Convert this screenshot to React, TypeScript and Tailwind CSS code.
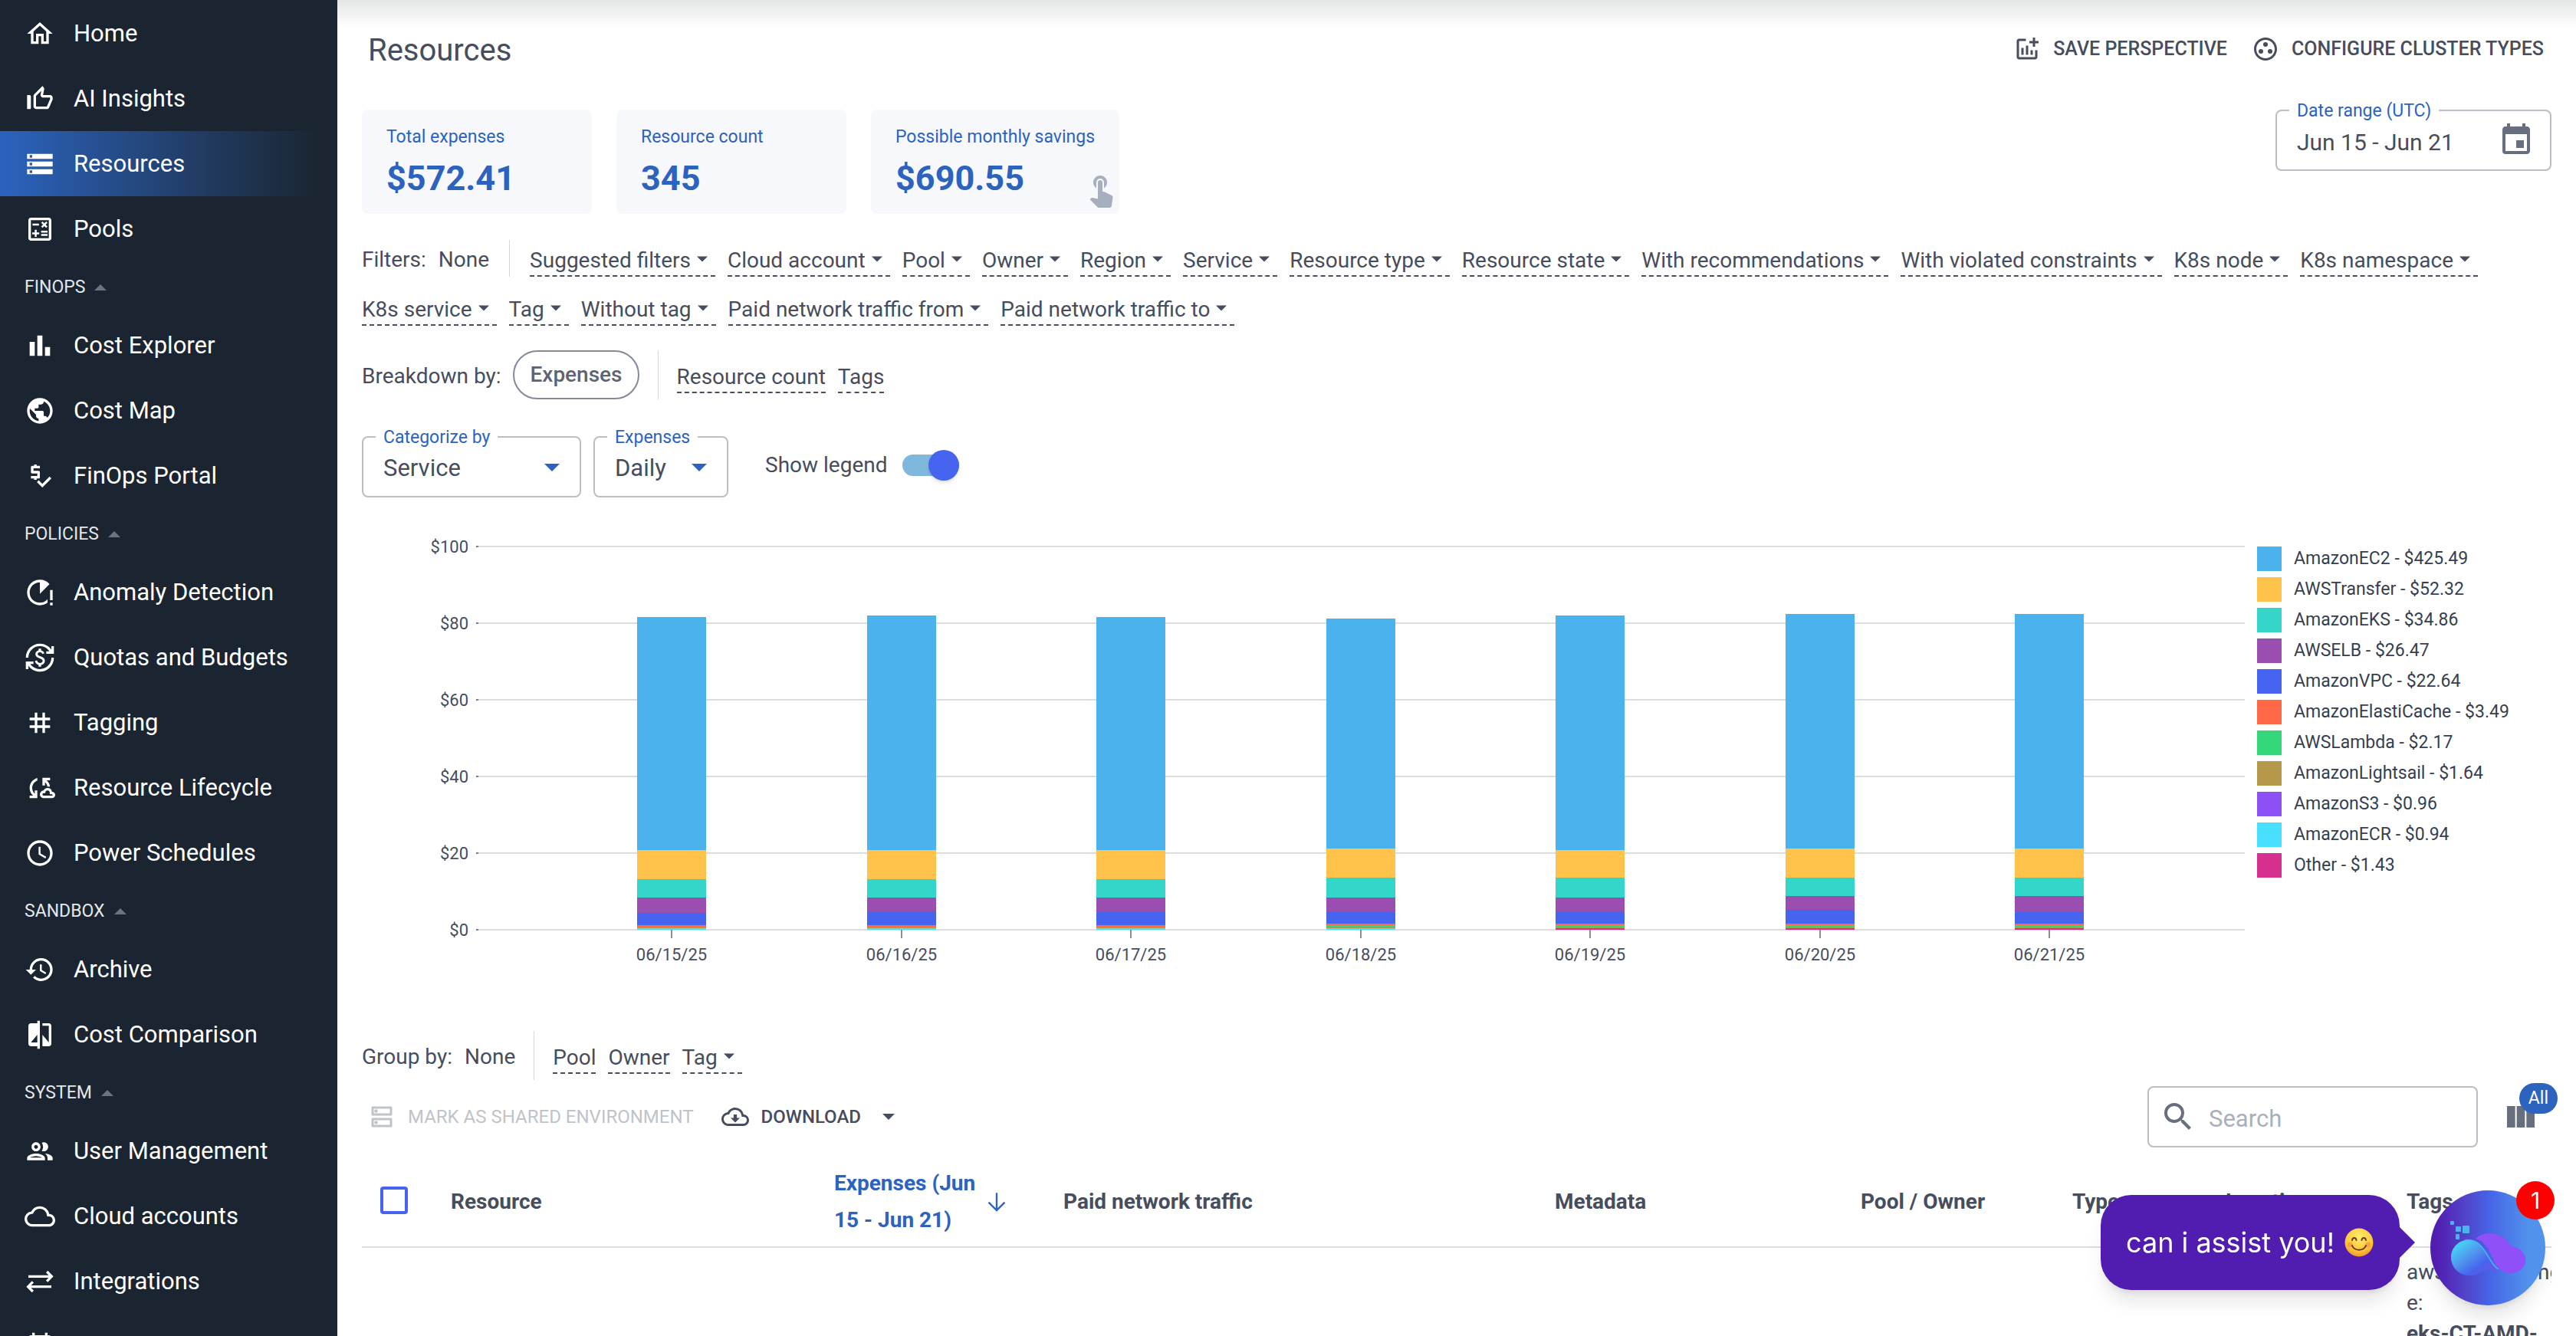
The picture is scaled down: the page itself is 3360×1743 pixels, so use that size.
import { useState } from 'react';
import type { ReactNode } from 'react';
import type { IconType } from 'react-icons';
import {
  MdAccessTime,
  MdBarChart,
  MdCompare,
  MdCurrencyExchange,
  MdEvent,
  MdHistory,
  MdOutlineCalculate,
  MdOutlineCloud,
  MdOutlineCloudDownload,
  MdOutlineCloudSync,
  MdOutlineDns,
  MdOutlineGroup,
  MdOutlineGroupWork,
  MdOutlineAddchart,
  MdOutlineHome,
  MdOutlineRunningWithErrors,
  MdPriceCheck,
  MdPublic,
  MdSearch,
  MdStorage,
  MdTag,
  MdThumbUpOffAlt,
  MdTouchApp,
  MdViewColumn,
} from 'react-icons/md';

function IntegrationsIcon({ className }: { className?: string }) {
  return (
    <svg viewBox="0 0 24 24" className={className} fill="none" stroke="currentColor" strokeWidth="2">
      <path d="M3 8h18M17.5 4.2 21.2 8l-3.7 3.8M21 16H3M6.500 12.200 2.800 16l3.700 3.800" />
    </svg>
  );
}

interface NavItem {
  label: string;
  icon: IconType | typeof IntegrationsIcon;
  active?: boolean;
}

interface NavSection {
  title?: string;
  items: NavItem[];
}

const sections: NavSection[] = [
  {
    items: [
      { label: 'Home', icon: MdOutlineHome },
      { label: 'AI Insights', icon: MdThumbUpOffAlt },
      { label: 'Resources', icon: MdStorage, active: true },
      { label: 'Pools', icon: MdOutlineCalculate },
    ],
  },
  {
    title: 'FINOPS',
    items: [
      { label: 'Cost Explorer', icon: MdBarChart },
      { label: 'Cost Map', icon: MdPublic },
      { label: 'FinOps Portal', icon: MdPriceCheck },
    ],
  },
  {
    title: 'POLICIES',
    items: [
      { label: 'Anomaly Detection', icon: MdOutlineRunningWithErrors },
      { label: 'Quotas and Budgets', icon: MdCurrencyExchange },
      { label: 'Tagging', icon: MdTag },
      { label: 'Resource Lifecycle', icon: MdOutlineCloudSync },
      { label: 'Power Schedules', icon: MdAccessTime },
    ],
  },
  {
    title: 'SANDBOX',
    items: [
      { label: 'Archive', icon: MdHistory },
      { label: 'Cost Comparison', icon: MdCompare },
    ],
  },
  {
    title: 'SYSTEM',
    items: [
      { label: 'User Management', icon: MdOutlineGroup },
      { label: 'Cloud accounts', icon: MdOutlineCloud },
      { label: 'Integrations', icon: IntegrationsIcon },
    ],
  },
];

const filters = [
  'Suggested filters',
  'Cloud account',
  'Pool',
  'Owner',
  'Region',
  'Service',
  'Resource type',
  'Resource state',
  'With recommendations',
  'With violated constraints',
  'K8s node',
  'K8s namespace',
  'K8s service',
  'Tag',
  'Without tag',
  'Paid network traffic from',
  'Paid network traffic to',
];

const services = [
  { name: 'AmazonEC2', total: '$425.49', fill: '#4ab3ee' },
  { name: 'AWSTransfer', total: '$52.32', fill: '#ffc24a' },
  { name: 'AmazonEKS', total: '$34.86', fill: '#33d6c9' },
  { name: 'AWSELB', total: '$26.47', fill: '#9a4fb0' },
  { name: 'AmazonVPC', total: '$22.64', fill: '#4664ef' },
  { name: 'AmazonElastiCache', total: '$3.49', fill: '#ff6847' },
  { name: 'AWSLambda', total: '$2.17', fill: '#33d679' },
  { name: 'AmazonLightsail', total: '$1.64', fill: '#b5984a' },
  { name: 'AmazonS3', total: '$0.96', fill: '#8c50f5' },
  { name: 'AmazonECR', total: '$0.94', fill: '#47e0ff' },
  { name: 'Other', total: '$1.43', fill: '#d6308f' },
];

// values follow the order of `services`
const days = [
  { date: '06/15/25', values: [60.8, 7.6, 4.8, 4, 3.2, 0.4, 0, 0.4, 0, 0.4, 0] },
  { date: '06/16/25', values: [61.2, 7.6, 4.8, 3.6, 3.6, 0.4, 0, 0.4, 0, 0.4, 0] },
  { date: '06/17/25', values: [60.8, 7.6, 4.8, 3.6, 3.6, 0.4, 0, 0.4, 0, 0.4, 0] },
  { date: '06/18/25', values: [60, 7.6, 5.2, 3.6, 3.2, 0.4, 0.4, 0.4, 0, 0.4, 0] },
  { date: '06/19/25', values: [61.2, 7.2, 5.2, 3.6, 3.2, 0.4, 0.4, 0.4, 0, 0, 0.4] },
  { date: '06/20/25', values: [61.2, 7.6, 4.8, 3.6, 3.6, 0.4, 0.4, 0.4, 0, 0, 0.4] },
  { date: '06/21/25', values: [61.2, 7.6, 4.8, 4, 3.2, 0.4, 0.4, 0.4, 0, 0, 0.4] },
];

function Caret({ className }: { className: string }) {
  return (
    <svg viewBox="0 0 10 5" className={className} fill="currentColor" aria-hidden="true">
      <path d="M0 0h10L5 5z" />
    </svg>
  );
}

function Sidebar() {
  return (
    <nav className="w-[440px] shrink-0 overflow-hidden bg-[#1a2531] pt-px text-white">
      {sections.map((section, i) => (
        <div key={i}>
          {section.title && (
            <button className="flex h-[67px] w-full items-center gap-3 px-8 text-[23px] text-gray-200">
              {section.title}
              <Caret className="h-2 w-4 rotate-180 text-[#6b7280]" />
            </button>
          )}
          {section.items.map(({ label, icon: Icon, active }) => (
            <a
              key={label}
              href="#"
              className={`flex h-[85px] items-center gap-6 px-8 text-[31px] ${
                active ? 'bg-linear-to-r from-[#2b63bf] to-[#1a2531] to-95%' : ''
              }`}
            >
              <Icon className="size-10 shrink-0" />
              {label}
            </a>
          ))}
        </div>
      ))}
      <a href="#" aria-label="Events" className="flex h-[85px] items-center px-8">
        <MdEvent className="size-10 shrink-0" />
      </a>
    </nav>
  );
}

function SummaryCard({ label, value, children }: { label: string; value: string; children?: ReactNode }) {
  return (
    <div className="relative h-[136px] min-w-[300px] rounded-lg bg-[#f7f8fb] px-8 pt-5 text-[#2b63bf]">
      <div className="text-[23px] leading-8">{label}</div>
      <div className="mt-2 text-[45px] leading-[60px] font-bold">{value}</div>
      {children}
    </div>
  );
}

function LinkButton({ label, menu }: { label: string; menu?: boolean }) {
  return (
    <button className="mt-2 flex h-10 items-center border-b-2 border-dashed border-[#464d5d]">
      {label}
      {menu && <Caret className="mr-2.5 mb-1 ml-2 h-2 w-3.5" />}
    </button>
  );
}

function RowLabel({ children }: { children: ReactNode }) {
  return <span className="pt-1">{children}</span>;
}

function Divider({ className }: { className: string }) {
  return <div className={`w-px bg-[#d8d8da] ${className}`} />;
}

function SelectField({ id, label, value, className }: { id: string; label: string; value: string; className: string }) {
  return (
    <div className={`relative h-20 rounded-lg border-2 border-[#bdbec5] ${className}`}>
      <label htmlFor={id} className="absolute -top-4 left-4 bg-white px-2.5 text-[23px] leading-8 text-[#2b63bf]">
        {label}
      </label>
      <select id={id} className="h-full w-full appearance-none bg-transparent pt-1 pl-[26px] text-[31px]">
        <option>{value}</option>
      </select>
      <Caret className="pointer-events-none absolute top-[34px] right-[26px] h-2.5 w-5 text-[#2b63bf]" />
    </div>
  );
}

function ExpensesChart() {
  const base = 524;
  return (
    <svg viewBox="0 0 2464 584" className="min-w-0 flex-1" role="img" aria-label="Daily expenses by service">
      {[100, 80, 60, 40, 20, 0].map((v) => (
        <g key={v}>
          <path d={`M151 ${base - v * 5}H2456`} stroke="#dcdcde" strokeWidth="2" />
          <path d={`M149 ${base - v * 5}h3`} stroke="#777d89" strokeWidth="2" />
          <text x="139" y={base + 8 - v * 5} textAnchor="end" fontSize="22" fill="#464d5d">
            ${v}
          </text>
        </g>
      ))}
      {days.map((day, i) => {
        const cx = 404 + Math.round(i * 299.5);
        let level = 0;
        return (
          <g key={day.date}>
            {services
              .map((s, k) => ({ fill: s.fill, v: day.values[k] }))
              .reverse()
              .map(({ fill, v }, k) => {
                level += v;
                return <rect key={k} x={cx - 45} y={base - Math.round(level * 5)} width="90" height={v * 5} fill={fill} />;
              })}
            <path d={`M${cx} ${base}v11`} stroke="#8b8f9c" strokeWidth="2" />
            <text x={cx} y="564" textAnchor="middle" fontSize="22" fill="#464d5d">
              {day.date}
            </text>
          </g>
        );
      })}
    </svg>
  );
}

function Smile() {
  return (
    <svg viewBox="0 0 40 40" className="size-10" role="img" aria-label="smile">
      <defs>
        <radialGradient id="face" cx="0.5" cy="0.3" r="0.75">
          <stop offset="0" stopColor="#ffee6b" />
          <stop offset="0.65" stopColor="#fcc63a" />
          <stop offset="1" stopColor="#ee8a2a" />
        </radialGradient>
      </defs>
      <circle cx="20" cy="20" r="18.500" fill="url(#face)" />
      <circle cx="8.500" cy="23" r="3.500" fill="#f58b3c" opacity="0.600" />
      <circle cx="31.500" cy="23" r="3.500" fill="#f58b3c" opacity="0.600" />
      <g fill="none" stroke="#6b3a12" strokeWidth="2" strokeLinecap="round">
        <path d="M11 17c.5-4 5-4 5.500 0M23.500 17c.5-4 5-4 5.500 0" />
        <path d="M11 24c3 7.500 15 7.500 18 0" />
      </g>
    </svg>
  );
}

function AssistantLogo() {
  return (
    <svg viewBox="0 0 150 150" className="size-full" aria-hidden="true">
      <defs>
        <linearGradient id="disc" x1="0" x2="1">
          <stop offset="0.050" stopColor="#511cb0" />
          <stop offset="0.300" stopColor="#5243c9" />
          <stop offset="0.500" stopColor="#4662e6" />
          <stop offset="0.850" stopColor="#5092ec" />
        </linearGradient>
        <linearGradient id="drop" x1="0" y1="0.200" x2="0.800" y2="1">
          <stop offset="0" stopColor="#47d8fb" />
          <stop offset="0.400" stopColor="#4e96ec" />
          <stop offset="0.700" stopColor="#4664ef" />
          <stop offset="1" stopColor="#7452e8" />
        </linearGradient>
      </defs>
      <circle cx="75" cy="75" r="75" fill="url(#disc)" />
      <g fill="#4ab3ee">
        <rect x="26" y="40" width="5" height="5" rx="1" />
        <rect x="33" y="47" width="7" height="7" rx="1" />
        <rect x="42" y="46" width="9" height="10" rx="1" />
        <rect x="33" y="57" width="5" height="7" rx="1" />
      </g>
      <path
        d="M51 64.500C37 64.500 27 75 27 87.500S37 111 51 111c13 0 17-8 27-8 5 0 8 2 12 1-6-3-10-11-16-20-6-10-11-19.500-23-19.500z"
        fill="url(#drop)"
      />
      <path d="M45 65c14-2 21 6 28 17 6 10 10 18 16 21" fill="none" stroke="#4ab3ee" strokeWidth="1.500" />
      <path
        d="M59 63c11-11 33-9 43 5 2 4 5 5 9 6 8 3 13 9 13 17 0 10-9 17-19 17-8 0-13-3-17-8C80 89 75 66 59 63z"
        fill="#8f50f8"
      />
    </svg>
  );
}

export default function App() {
  const [showLegend, setShowLegend] = useState(true);

  return (
    <div className="flex h-screen overflow-hidden bg-white font-['Roboto',sans-serif] text-[28px] leading-8 text-[#464d5d]">
      <Sidebar />

      <main className="relative min-w-0 flex-1 overflow-hidden px-8 pt-10">
        <div className="pointer-events-none absolute inset-x-0 top-0 h-9 bg-linear-to-b from-[#e3e6e4] to-white" />

        <header className="flex h-12 items-center gap-8 text-[25px] font-medium">
          <h1 className="mr-auto pt-1 pl-2 text-[40px] leading-12 font-normal">Resources</h1>
          <button className="flex items-center gap-4">
            <MdOutlineAddchart className="size-9" />
            SAVE PERSPECTIVE
          </button>
          <button className="mr-2.5 flex items-center gap-4">
            <MdOutlineGroupWork className="size-9" />
            CONFIGURE CLUSTER TYPES
          </button>
        </header>

        <div className="mt-[55px] flex items-start gap-8">
          <SummaryCard label="Total expenses" value="$572.41" />
          <SummaryCard label="Resource count" value="345" />
          <SummaryCard label="Possible monthly savings" value="$690.55">
            <MdTouchApp className="absolute right-0 bottom-2 size-12 text-[#a7afbe]" />
          </SummaryCard>
          <div className="relative ml-auto flex h-20 w-[360px] items-center rounded-lg border-2 border-[#bdbec5] pr-5">
            <label
              htmlFor="range"
              className="absolute -top-4 left-4 bg-white px-2.5 text-[23px] leading-8 text-[#2b63bf]"
            >
              Date range (UTC)
            </label>
            <input
              id="range"
              readOnly
              value="Jun 15 - Jun 21"
              className="h-full min-w-0 flex-1 bg-transparent pt-1 pl-[26px] text-[30px] outline-none"
            />
            <MdEvent className="size-12 text-[#676e7d]" />
          </div>
        </div>

        <div className="mt-[34px] flex flex-wrap items-center gap-4">
          <RowLabel>Filters:</RowLabel>
          <RowLabel>None</RowLabel>
          <Divider className="mx-2.5 h-12" />
          {filters.map((f) => (
            <LinkButton key={f} label={f} menu />
          ))}
        </div>

        <div className="mt-8 flex h-16 items-center gap-4">
          <RowLabel>Breakdown by:</RowLabel>
          <button className="h-16 rounded-full border-2 border-[#828999] px-5 font-medium text-[#5d6473]">
            Expenses
          </button>
          <Divider className="mx-2 h-full" />
          <LinkButton label="Resource count" />
          <LinkButton label="Tags" />
        </div>

        <div className="mt-12 flex items-center gap-4">
          <SelectField id="categorize" label="Categorize by" value="Service" className="w-[286px]" />
          <SelectField id="expenses" label="Expenses" value="Daily" className="w-[176px]" />
          <label className="mb-1 ml-8 flex items-center gap-5">
            Show legend
            <input
              type="checkbox"
              role="switch"
              checked={showLegend}
              onChange={(e) => setShowLegend(e.target.checked)}
              className="peer sr-only"
            />
            <span className="flex h-7 w-[74px] items-center justify-start rounded-full bg-gray-300 peer-checked:justify-end peer-checked:bg-[#80b8dd]">
              <span className="size-10 rounded-full bg-[#4664ef] shadow-md" />
            </span>
          </label>
        </div>

        <div className="mt-10 flex items-start gap-2">
          <ExpensesChart />
          {showLegend && (
            <ul className="flex w-96 flex-col gap-2 pt-6 text-[23px] leading-8 text-[#363f4f]">
              {services.map((s) => (
                <li key={s.name} className="flex items-center gap-4">
                  <span className="size-8" style={{ backgroundColor: s.fill }} />
                  {s.name} - {s.total}
                </li>
              ))}
            </ul>
          )}
        </div>

        <div className="mt-[72px] flex h-16 items-center gap-4">
          <RowLabel>Group by:</RowLabel>
          <RowLabel>None</RowLabel>
          <Divider className="mx-2 h-full" />
          <LinkButton label="Pool" />
          <LinkButton label="Owner" />
          <LinkButton label="Tag" menu />
        </div>

        <div className="mt-2 flex h-20 items-center text-2xl font-medium">
          <button disabled className="flex items-center gap-4 pl-2 font-normal text-[#c0c3ca]">
            <MdOutlineDns className="size-9" />
            MARK AS SHARED ENVIRONMENT
          </button>
          <button className="ml-9 flex items-center gap-4">
            <MdOutlineCloudDownload className="size-9" />
            DOWNLOAD
            <Caret className="ml-3 h-2 w-4" />
          </button>
          <div className="ml-auto flex h-20 w-[431px] items-center gap-4 rounded-lg border-2 border-[#bdbec5] pl-3.5 font-normal">
            <MdSearch className="size-12 shrink-0 text-[#676e7d]" />
            <input
              type="search"
              aria-label="Search"
              placeholder="Search"
              className="h-full min-w-0 flex-1 bg-transparent pt-1 text-[31px] outline-none placeholder:text-[#a9afbc]"
            />
          </div>
          <button aria-label="Columns" className="relative mr-4 ml-8 text-[#676e7d]">
            <MdViewColumn className="size-12" />
            <span className="absolute -top-5 -right-6 rounded-full bg-[#2b63bf] px-3 text-[23px] leading-10 font-normal text-white">
              All
            </span>
          </button>
        </div>

        <table className="mt-2 w-full table-fixed text-left">
          <colgroup>
            <col className="w-[84px]" />
            <col className="w-[500px]" />
            <col className="w-[299px]" />
            <col />
            <col className="w-[399px]" />
            <col className="w-[276px]" />
            <col className="w-[200px]" />
            <col className="w-[236px]" />
            <col className="w-[221px]" />
          </colgroup>
          <thead>
            <tr className="h-[122px] border-b-2 border-[#dcdcde] [&>th]:pt-1 [&>th]:pl-8">
              <th>
                <input
                  type="checkbox"
                  aria-label="Select all"
                  className="-mt-1 -ml-2 block size-9 appearance-none rounded-sm border-4 border-[#4664ef]"
                />
              </th>
              <th>Resource</th>
              <th className="text-[#2b63bf]">
                <button className="flex items-center gap-2 text-left leading-12">
                  <span className="w-[190px]">Expenses (Jun 15 - Jun 21)</span>
                  <svg viewBox="0 0 24 24" className="size-7 shrink-0" fill="none" stroke="currentColor" strokeWidth="2">
                    <path d="M12 2v19M3 12.500l9 9 9-9" />
                  </svg>
                </button>
              </th>
              <th>Paid network traffic</th>
              <th>Metadata</th>
              <th>Pool / Owner</th>
              <th>Type</th>
              <th>Location</th>
              <th>Tags</th>
            </tr>
          </thead>
          <tbody>
            <tr>
              <td colSpan={8} />
              <td className="overflow-hidden pt-3 pl-8 leading-10 whitespace-nowrap">
                aws:autoscaling
                <br />
                e:
                <br />
                <strong>eks-CT-AMD-</strong>
              </td>
            </tr>
          </tbody>
        </table>
      </main>

      {/* chat assistant */}
      <div className="fixed right-10 bottom-10 flex items-center gap-10">
        <div className="relative mb-3.5 flex h-[124px] items-center gap-3 rounded-[40px] bg-[#511cb0] px-[33px] font-['Inter',sans-serif] text-4xl text-white shadow-xl">
          <svg viewBox="0 0 20 40" className="absolute top-[42px] left-full h-10 w-5" fill="#511cb0">
            <path d="M0 0l20 20L0 40z" />
          </svg>
          can i assist you!
          <Smile />
        </div>
        <button aria-label="Open chat" className="relative size-[150px] rounded-full shadow-xl">
          <AssistantLogo />
          <span className="absolute -top-3 -right-3 size-[50px] rounded-full bg-[#ff0000] font-['Inter',sans-serif] text-3xl leading-[50px] text-white">
            1
          </span>
        </button>
      </div>
    </div>
  );
}
